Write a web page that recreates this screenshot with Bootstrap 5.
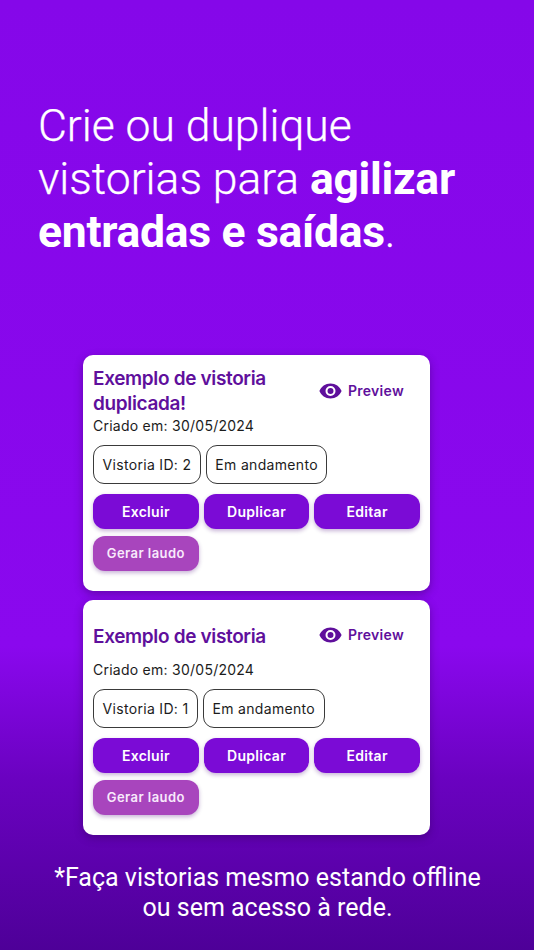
<!DOCTYPE html>
<html lang="pt-BR">
<head>
<meta charset="utf-8">
<link href="https://cdn.jsdelivr.net/npm/bootstrap@5.3.0/dist/css/bootstrap.min.css" rel="stylesheet">
<style>
html,body{height:100%;margin:0}
body{width:534px;height:950px;overflow:hidden;font-family:Inter,"Liberation Sans",sans-serif;background:linear-gradient(180deg,#8507e9 0%,#8a08ee 68%,#6a02c0 82%,#4e0098 100%)}
.hero{font-family:Roboto,"Liberation Sans",sans-serif;font-weight:300;font-size:44.5px;line-height:53px;color:#fff;margin:0;padding:100px 20px 0 38px;height:355px;-webkit-text-stroke:.25px #fff;letter-spacing:-.03px}
.hero b{font-weight:700;letter-spacing:-.3px;-webkit-text-stroke:0}
.shot{width:347px;margin-left:83px;border-radius:10px;background:#fff;padding:0 10px;box-shadow:0 3px 8px rgba(50,0,90,.45)}
.shot-a{height:236px;padding-top:11px;margin-bottom:9px}
.shot-b{height:235px;padding-top:24px}
.ttl{font-size:19px;line-height:25px;font-weight:600;color:#5f0f9c;letter-spacing:-.35px;margin:0;width:205px}
.prev{color:#5f0f9c;font-size:14px;font-weight:600;gap:6px;margin-right:16px;margin-top:-1px;line-height:1;letter-spacing:.3px}
.shot-b .prev{margin-top:-4px}
.made{font-size:14px;line-height:20px;color:#1c1c1c;letter-spacing:.25px}
.shot-b .made{margin-top:11px}
.chip{border:1.2px solid #3a3a3a;border-radius:11px;height:39px;padding:0 8.5px;font-size:14px;color:#1c1c1c;letter-spacing:.32px;background:#fff}
.chips{gap:5px;margin-top:9px}
.acts{display:grid;grid-template-columns:repeat(3,1fr);gap:7px 5px;margin-top:10px}
.act{background:#7b0bd6;color:#fff;border:0;border-radius:12px;height:35px;font-size:14px;font-weight:600;padding:0;letter-spacing:.3px;box-shadow:0 2px 4px rgba(70,0,120,.3)}
.act.soft{background:#a845bd;font-size:13px;color:#f8eafc;letter-spacing:.45px}
.note{font-family:Roboto,"Liberation Sans",sans-serif;font-size:25px;line-height:30px;color:#fff;text-align:center;margin:0;padding:28px 0 0 1px}
</style>
</head>
<body>
<h1 class="hero">Crie ou duplique<br>vistorias para <b>agilizar<br>entradas e saídas</b>.</h1>

<div class="shot shot-a">
  <div class="d-flex align-items-center justify-content-between">
    <h2 class="ttl">Exemplo de vistoria duplicada!</h2>
    <div class="prev d-flex align-items-center">
      <svg width="23" height="16" viewBox="0 0 23 16" aria-hidden="true"><path fill="#5f0f9c" fill-rule="evenodd" d="M11.5 .5C6.4.5 2.2 3.6.4 8c1.8 4.400 6 7.500 11.100 7.500S20.800 12.400 22.600 8C20.800 3.600 16.600.5 11.500.5zm0 12.500a5 5 0 1 1 0-10 5 5 0 0 1 0 10zm0-8a3 3 0 1 0 0 6 3 3 0 0 0 0-6z"/></svg>
      <span>Preview</span>
    </div>
  </div>
  <div class="made">Criado em: 30/05/2024</div>
  <div class="chips d-flex">
    <div class="chip d-flex align-items-center">Vistoria ID: 2</div>
    <div class="chip d-flex align-items-center">Em andamento</div>
  </div>
  <div class="acts">
    <button class="act btn">Excluir</button>
    <button class="act btn">Duplicar</button>
    <button class="act btn">Editar</button>
    <button class="act btn soft">Gerar laudo</button>
  </div>
</div>

<div class="shot shot-b">
  <div class="d-flex align-items-center justify-content-between">
    <h2 class="ttl">Exemplo de vistoria</h2>
    <div class="prev d-flex align-items-center">
      <svg width="23" height="16" viewBox="0 0 23 16" aria-hidden="true"><path fill="#5f0f9c" fill-rule="evenodd" d="M11.5 .5C6.4.5 2.2 3.6.4 8c1.8 4.400 6 7.500 11.100 7.500S20.800 12.400 22.600 8C20.800 3.600 16.600.5 11.500.5zm0 12.500a5 5 0 1 1 0-10 5 5 0 0 1 0 10zm0-8a3 3 0 1 0 0 6 3 3 0 0 0 0-6z"/></svg>
      <span>Preview</span>
    </div>
  </div>
  <div class="made">Criado em: 30/05/2024</div>
  <div class="chips d-flex">
    <div class="chip d-flex align-items-center">Vistoria ID: 1</div>
    <div class="chip d-flex align-items-center">Em andamento</div>
  </div>
  <div class="acts">
    <button class="act btn">Excluir</button>
    <button class="act btn">Duplicar</button>
    <button class="act btn">Editar</button>
    <button class="act btn soft">Gerar laudo</button>
  </div>
</div>

<p class="note">*Faça vistorias mesmo estando offline<br>ou sem acesso à rede.</p>
<script src="https://cdn.jsdelivr.net/npm/bootstrap@5.3.0/dist/js/bootstrap.bundle.min.js"></script>
</body>
</html>
